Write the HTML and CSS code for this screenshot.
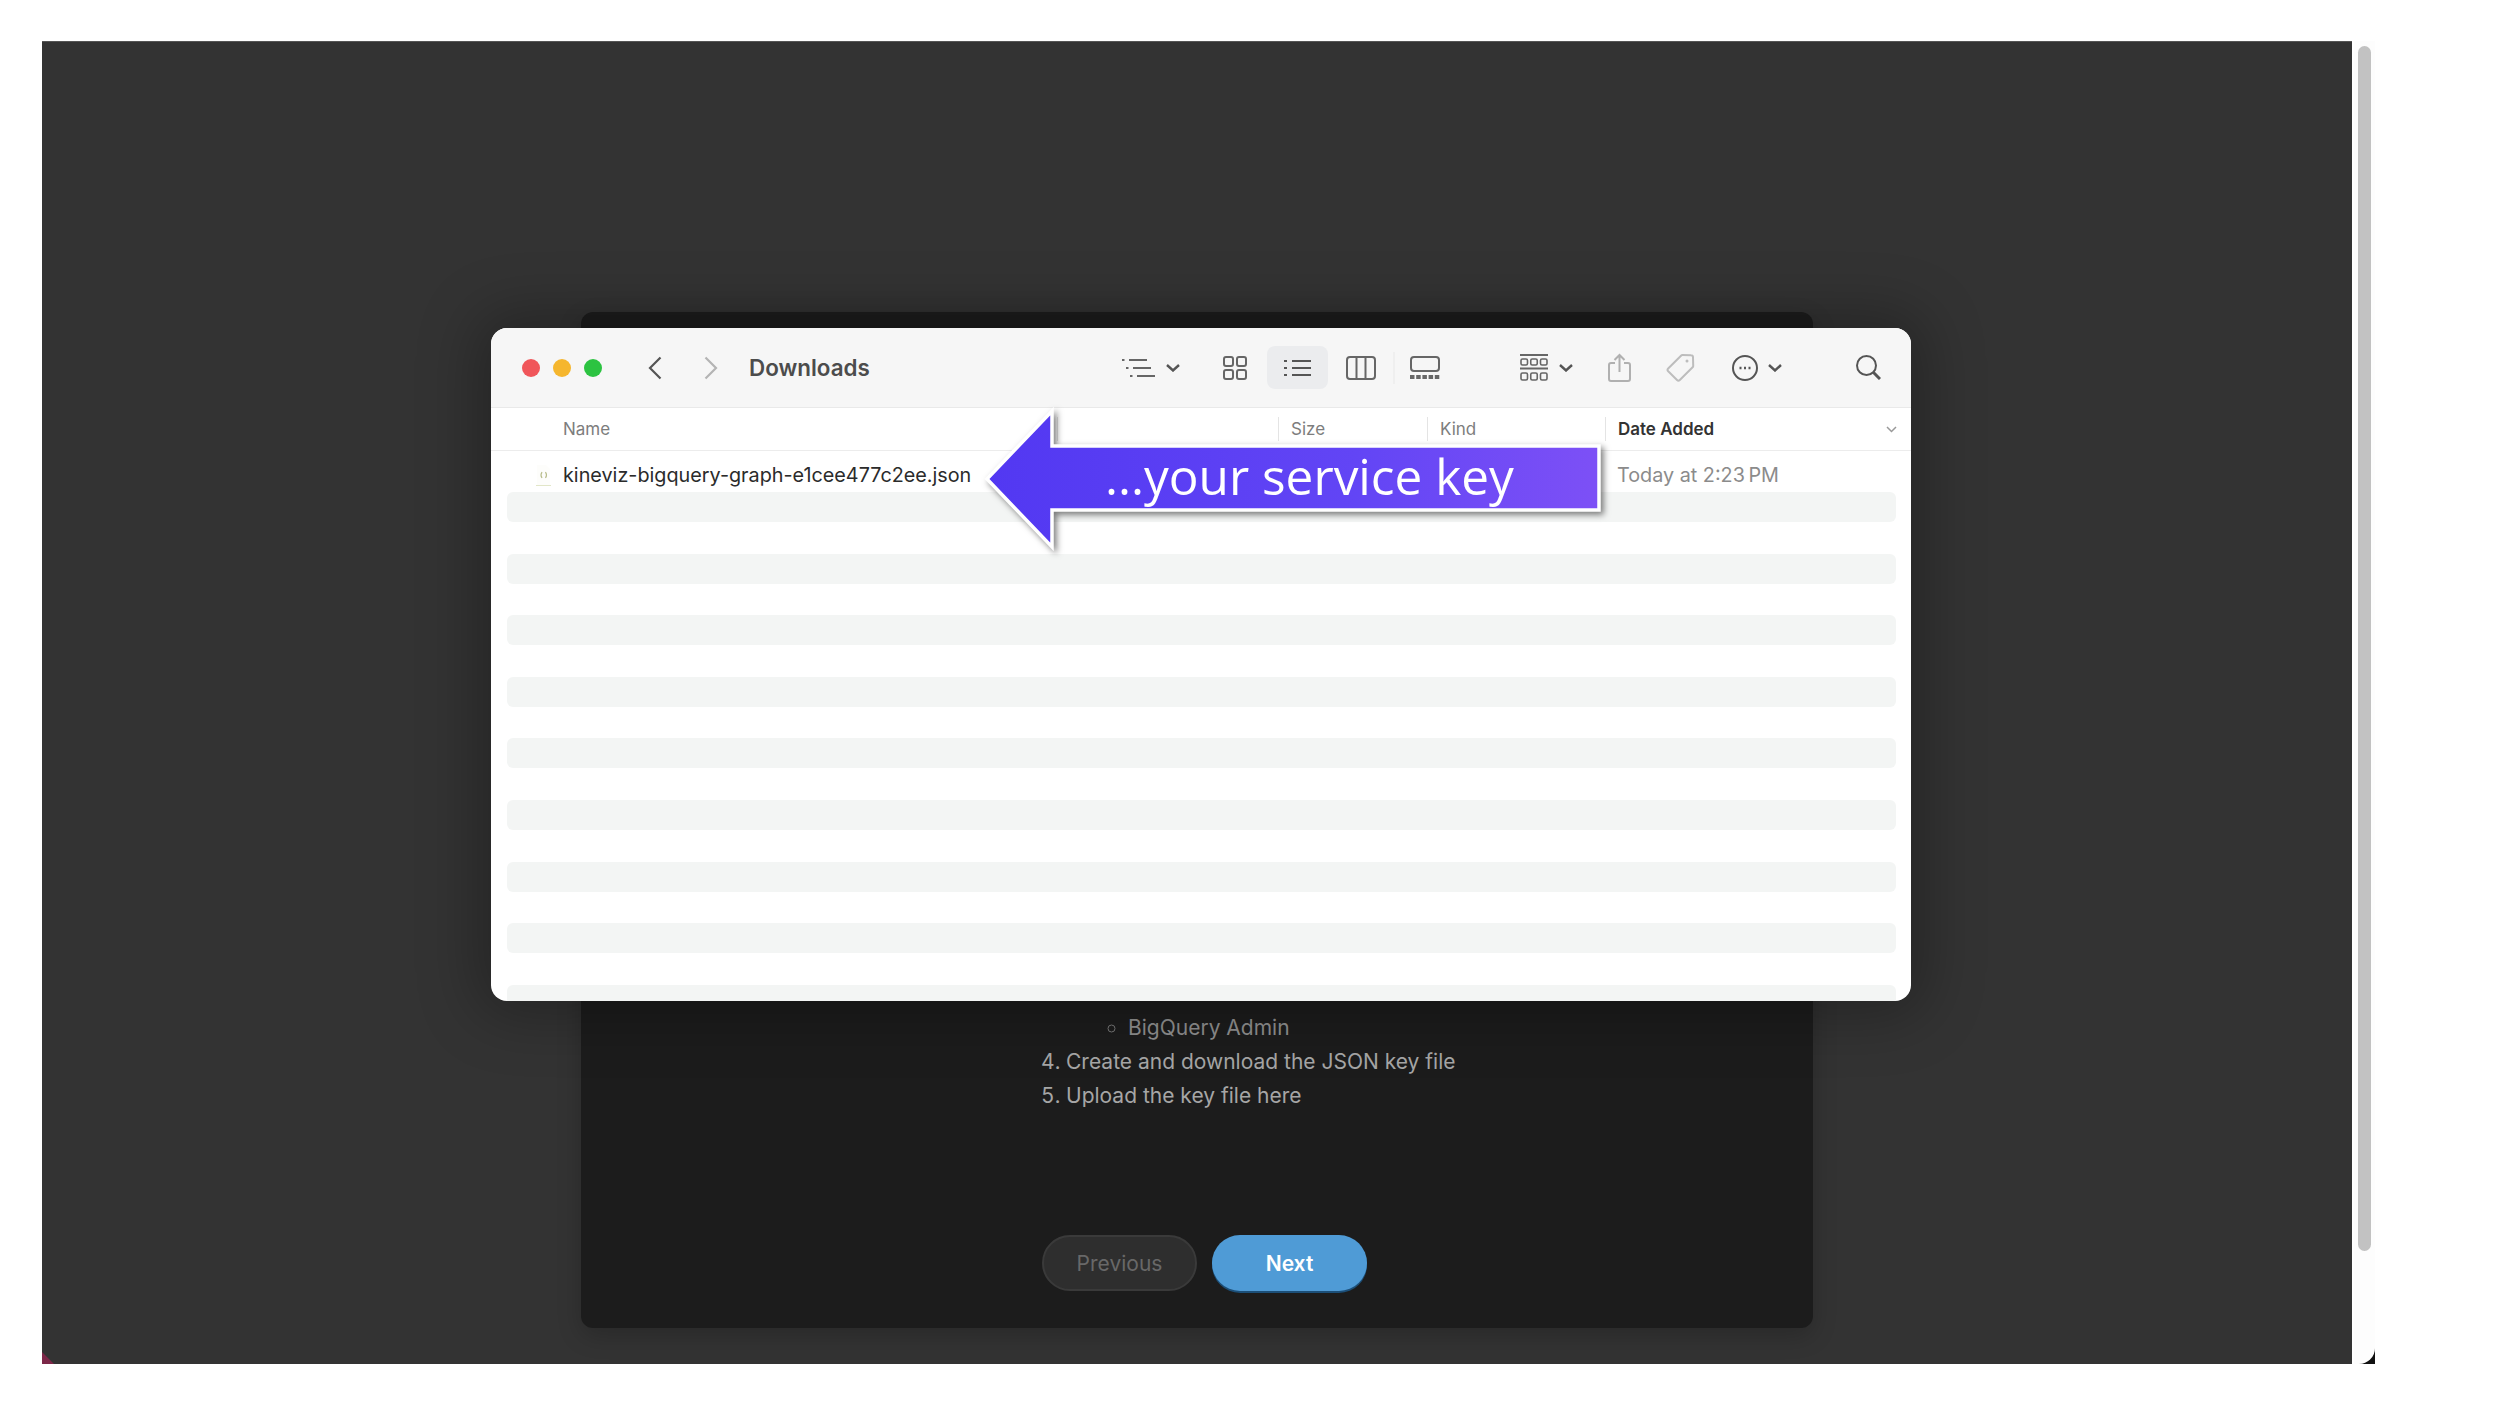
FILE: index.html
```html
<!DOCTYPE html>
<html lang="en">
<head>
    <meta charset="UTF-8">
    <meta name="viewport" content="width=device-width, initial-scale=1.0">
    <title>Downloads</title>
    <link rel="stylesheet" href="styles.css">
</head>
<body>
    <div class="viewport">
        <div class="stage">
            <!-- Dialog behind the Finder window -->
            <div class="dialog">
                <ul class="roles">
                    <li>BigQuery Admin</li>
                </ul>
                <ol class="steps" start="4">
                    <li>Create and download the JSON key file</li>
                    <li>Upload the key file here</li>
                </ol>
                <div class="dialog-buttons">
                    <button class="btn btn-prev">Previous</button>
                    <button class="btn btn-next">Next</button>
                </div>
            </div>

            <!-- Finder window -->
            <div class="finder">
                <div class="toolbar">
                    <span class="light light-red"></span>
                    <span class="light light-yellow"></span>
                    <span class="light light-green"></span>
                    <svg class="ic-back" width="14" height="24" viewBox="0 0 14 24"><path d="M12.5 1.5 2 12l10.5 10.5" fill="none" stroke="#555" stroke-width="2.2"/></svg>
                    <svg class="ic-forward" width="14" height="24" viewBox="0 0 14 24"><path d="M1.5 1.5 12 12 1.5 22.500" fill="none" stroke="#b4b4b4" stroke-width="2.2"/></svg>
                    <span class="title">Downloads</span>

                    <div class="tools">
                        <svg width="33" height="20" viewBox="0 0 33 20" stroke="#666" stroke-width="2"><path d="M7 2h18M11 10h18M15 18h18M0 2h2.500M4 10h2.500M8 18h2.500"/></svg>
                        <svg class="ic-chevron" width="14" height="8" viewBox="0 0 14 8"><path d="M1 1l6 5.500L13 1" fill="none" stroke="#555" stroke-width="2.400"/></svg>
                        <svg class="ic-grid" width="24" height="24" viewBox="0 0 24 24" fill="none" stroke="#666" stroke-width="2"><rect x="1" y="1" width="9" height="9" rx="2"/><rect x="14" y="1" width="9" height="9" rx="2"/><rect x="1" y="14" width="9" height="9" rx="2"/><rect x="14" y="14" width="9" height="9" rx="2"/></svg>
                        <span class="tool-active">
                            <svg width="27" height="18" viewBox="0 0 27 18" stroke="#555" stroke-width="2"><path d="M8 2h19M8 9h19M8 16h19M0 2h3M0 9h3M0 16h3"/></svg>
                        </span>
                        <svg class="ic-columns" width="30" height="24" viewBox="0 0 30 24" fill="none" stroke="#666" stroke-width="2"><rect x="1" y="1" width="28" height="22" rx="3"/><path d="M10.500 1v22M19.500 1v22"/></svg>
                        <span class="tool-sep"></span>
                        <svg class="ic-gallery" width="30" height="23" viewBox="0 0 30 23"><rect x="1" y="1" width="28" height="14" rx="3" fill="none" stroke="#666" stroke-width="2"/><path d="M0 21h30" stroke="#666" stroke-width="4" stroke-dasharray="4.500 1.700"/></svg>
                        <svg class="ic-group" width="28" height="28" viewBox="0 0 28 28" fill="none" stroke="#666"><path d="M0 1h28M0 14.500h28" stroke-width="2"/><g stroke-width="1.600"><rect x="1" y="5" width="6.500" height="6" rx="1.500"/><rect x="10.750" y="5" width="6.500" height="6" rx="1.500"/><rect x="20.500" y="5" width="6.500" height="6" rx="1.500"/><rect x="1" y="19" width="6.500" height="7" rx="1.500"/><rect x="10.750" y="19" width="6.500" height="7" rx="1.500"/><rect x="20.500" y="19" width="6.500" height="7" rx="1.500"/></g></svg>
                        <svg class="ic-chevron" width="14" height="8" viewBox="0 0 14 8"><path d="M1 1l6 5.500L13 1" fill="none" stroke="#555" stroke-width="2.400"/></svg>
                        <svg class="ic-share" width="23" height="29" viewBox="0 0 23 29" fill="none" stroke="#b0b0b0" stroke-width="2"><path d="M7 10H3a2 2 0 0 0-2 2v14a2 2 0 0 0 2 2h17a2 2 0 0 0 2-2V12a2 2 0 0 0-2-2h-4M11.500 19V2M6.500 7l5-5 5 5"/></svg>
                        <svg class="ic-tag" width="29" height="29" viewBox="0 0 29 29" fill="none" stroke="#bdbdbd" stroke-width="2"><path d="M2.200 15.500 15 2.700a2 2 0 0 1 1.500-.6l8.500.2a2 2 0 0 1 2 2l.2 8.500a2 2 0 0 1-.6 1.500L13.800 27a2 2 0 0 1-2.800 0l-8.800-8.700a2 2 0 0 1 0-2.800z"/><circle cx="21" cy="8" r="1.500" fill="#bdbdbd" stroke="none"/></svg>
                        <svg class="ic-more" width="26" height="26" viewBox="0 0 26 26" fill="none" stroke="#555" stroke-width="2"><circle cx="13" cy="13" r="12"/><path d="M7.500 13h2M12 13h2M16.500 13h2" stroke-width="2.400"/></svg>
                        <svg class="ic-chevron-near" width="14" height="8" viewBox="0 0 14 8"><path d="M1 1l6 5.500L13 1" fill="none" stroke="#555" stroke-width="2.400"/></svg>
                        <svg class="ic-search" width="25" height="25" viewBox="0 0 25 25" fill="none" stroke="#555"><circle cx="10.500" cy="10.500" r="9.500" stroke-width="2"/><path d="M17.500 17.500l6.500 6.500" stroke-width="3"/></svg>
                    </div>
                </div>

                <div class="columns">
                    <div class="col col-name">Name</div>
                    <div class="col"></div>
                    <div class="col">Size</div>
                    <div class="col">Kind</div>
                    <div class="col col-sorted">Date Added
                        <svg width="11" height="7" viewBox="0 0 11 7"><path d="M1 1l4.500 4.500L10 1" fill="none" stroke="#999" stroke-width="1.500"/></svg>
                    </div>
                </div>

                <div class="file-row">
                    <div class="file-name">
                        <svg width="15" height="22" viewBox="0 0 15 22"><path d="M1 1h9l4 4v16H1z" fill="#fdfdfb"/><path d="M0 21.500h15" stroke="#e2e6c8" stroke-width="1"/><path d="M6 8q-2 3 0 6M9.500 8q2 3 0 6" fill="none" stroke="#b9bd8c" stroke-width="1.200"/></svg>
                        <span>kineviz-bigquery-graph-e1cee477c2ee.json</span>
                    </div>
                    <div class="file-date">Today at 2:23&#8239;PM</div>
                </div>

                <div class="stripes">
                    <div class="stripe"></div>
                    <div class="stripe"></div>
                    <div class="stripe"></div>
                    <div class="stripe"></div>
                    <div class="stripe"></div>
                    <div class="stripe"></div>
                    <div class="stripe"></div>
                    <div class="stripe"></div>
                    <div class="stripe"></div>
                </div>
            </div>

            <!-- Callout arrow -->
            <div class="callout">
                <svg width="630" height="150" viewBox="0 0 630 150">
                    <defs>
                        <linearGradient id="calloutFill" x1="0" y1="0" x2="1" y2="0">
                            <stop offset="0" stop-color="#5238f2"/>
                            <stop offset="0.6" stop-color="#6245f5"/>
                            <stop offset="1" stop-color="#7d50f6"/>
                        </linearGradient>
                    </defs>
                    <polygon points="4,74 69,6 69,41 616,41 616,105 69,105 69,142" fill="url(#calloutFill)" stroke="#fff" stroke-width="3.500"/>
                </svg>
                <span class="callout-text">...your service key</span>
            </div>
        </div>

        <div class="scrollbar">
            <div class="scrollbar-track">
                <div class="scrollbar-thumb"></div>
            </div>
        </div>
    </div>
</body>
</html>
```

FILE: styles.css
```css
/* Page */
body {
    margin: 0;
    background-color: #ffffff;
    font-family: Inter, "Noto Sans", sans-serif;
}
.viewport {
    display: flex;
    width: 2333px;
    height: 1323px;
    margin: 41px 0 0 42px;
}
.stage {
    position: relative;
    width: 2310px;
    height: 100%;
    background-color: #333333;
    box-shadow: inset 0 1px 0 #555555;
}
/* little red corner bottom left */
.stage::after {
    content: "";
    position: absolute;
    left: 0;
    bottom: 0;
    width: 12px;
    height: 12px;
    background-color: #7c2748;
    clip-path: polygon(0 0, 100% 100%, 0 100%);
}

/* Scrollbar */
.scrollbar {
    width: 21px;
    margin-left: 2px;
    background-color: #111111;
}
.scrollbar-track {
    height: 100%;
    padding: 5px 4px 0;
    box-sizing: border-box;
    background-color: #fdfdfd;
    border-bottom-right-radius: 16px;
}
.scrollbar-thumb {
    width: 13px;
    height: 1205px;
    background-color: #c2c2c2;
    border-radius: 7px;
}

/* Dialog */
.dialog {
    display: flex;
    flex-direction: column;
    justify-content: flex-end;
    box-sizing: border-box;
    width: 1232px;
    height: 1016px;
    margin-left: 539px;
    position: relative;
    top: 271px;
    padding: 0 0 37px 460px;
    background-color: #1c1c1c;
    border-radius: 12px;
    box-shadow: 0 8px 24px rgba(0, 0, 0, 0.2);
    font-size: 21px;
    line-height: 34px;
}
.roles {
    margin: 0;
    padding-left: 87px;
    color: #8f8f8f;
    list-style-type: circle;
}
.roles li::marker {
    color: #777777;
}
.steps {
    margin: 0;
    padding-left: 25px;
    color: #a6a6a6;
}
.dialog-buttons {
    display: flex;
    gap: 15px;
    margin-top: 122px;
    padding-left: 1px;
}
.btn {
    width: 155px;
    height: 56px;
    border-radius: 28px;
    font-family: inherit;
    font-size: 21px;
    box-sizing: border-box;
}
.btn-prev {
    background-color: #2e2e2e;
    border: 2px solid #3a3a3a;
    color: #686868;
}
.btn-next {
    background-color: #4f9bd6;
    border: none;
    color: #ffffff;
    font-weight: 600;
    box-shadow: 0 2px 0 #1c4f78;
}

/* Finder window */
.finder {
    position: absolute;
    left: 449px;
    top: 287px;
    width: 1420px;
    height: 673px;
    background-color: #ffffff;
    border-radius: 16px;
    overflow: hidden;
    box-shadow: 0 0 60px 14px rgba(0, 0, 0, 0.28);
}
.toolbar {
    display: flex;
    align-items: center;
    height: 80px;
    padding: 0 30px 0 31px;
    background-color: #f6f6f6;
    border-bottom: 1px solid #e9e9e9;
    box-sizing: border-box;
}
.light {
    width: 18px;
    height: 18px;
    margin-right: 13px;
    border-radius: 50%;
}
.light-red { background-color: #f0565a; }
.light-yellow { background-color: #f5b62e; }
.light-green { background-color: #2cc341; margin-right: 0; }
.ic-back { margin-left: 46px; }
.ic-forward { margin-left: 42px; }
.title {
    margin-left: 31px;
    font-size: 22.4px;
    font-weight: 600;
    color: #4c4c4c;
}
.tools {
    display: flex;
    align-items: center;
    margin-left: auto;
}
.ic-chevron { margin-left: 11px; }
.ic-chevron-near { margin-left: 10px; }
.ic-grid { margin-left: 43px; }
.tool-active {
    display: flex;
    align-items: center;
    justify-content: center;
    width: 61px;
    height: 43px;
    margin-left: 20px;
    background-color: #ebecee;
    border-radius: 8px;
}
.ic-columns { margin-left: 18px; }
.tool-sep {
    width: 2px;
    height: 32px;
    margin-left: 17px;
    background-color: #efefef;
}
.ic-gallery { margin-left: 15px; }
.ic-group { margin-left: 80px; }
.ic-share { margin-left: 35px; }
.ic-tag { margin-left: 35px; }
.ic-more { margin-left: 37px; }
.ic-search { margin-left: 74px; }

/* Column headers and the file row share these columns */
.columns,
.file-row {
    display: grid;
    grid-template-columns: 566px 221px 149px 178px 1fr;
    align-items: center;
}
.columns {
    height: 43px;
    border-bottom: 1px solid #ececec;
    box-sizing: border-box;
    font-size: 17px;
    color: #7d7d7d;
}
.col {
    height: 24px;
    line-height: 24px;
    padding-left: 12px;
    border-left: 1px solid #e4e4e4;
}
.col-name {
    padding-left: 72px;
    border-left: none;
}
.col-sorted {
    display: flex;
    align-items: center;
    justify-content: space-between;
    padding-right: 14px;
    font-weight: 600;
    color: #333333;
}

/* File row */
.file-row {
    height: 41px;
    padding-top: 7px;
    box-sizing: border-box;
    font-size: 19.8px;
}
.file-name {
    display: flex;
    align-items: center;
    gap: 12px;
    padding-left: 45px;
    color: #2b2b2b;
}
.file-date {
    grid-column: 5;
    padding-left: 12px;
    color: #8b8b8b;
    white-space: nowrap;
}

/* Zebra stripes */
.stripes {
    display: flex;
    flex-direction: column;
    gap: 31.6px;
    padding: 0 15px 0 16px;
}
.stripe {
    flex-shrink: 0;
    height: 30px;
    background-color: #f3f5f4;
    border-radius: 6px;
}

/* Callout arrow */
.callout {
    position: absolute;
    left: 941px;
    top: 364px;
    width: 630px;
    height: 150px;
    filter: drop-shadow(3px 3px 3px rgba(0, 0, 0, 0.5));
}
.callout svg {
    display: block;
}
.callout-text {
    position: absolute;
    left: 122px;
    top: 39px;
    font-family: "Open Sans", sans-serif;
    font-size: 49.5px;
    line-height: 64px;
    white-space: nowrap;
    color: #ffffff;
}
```
